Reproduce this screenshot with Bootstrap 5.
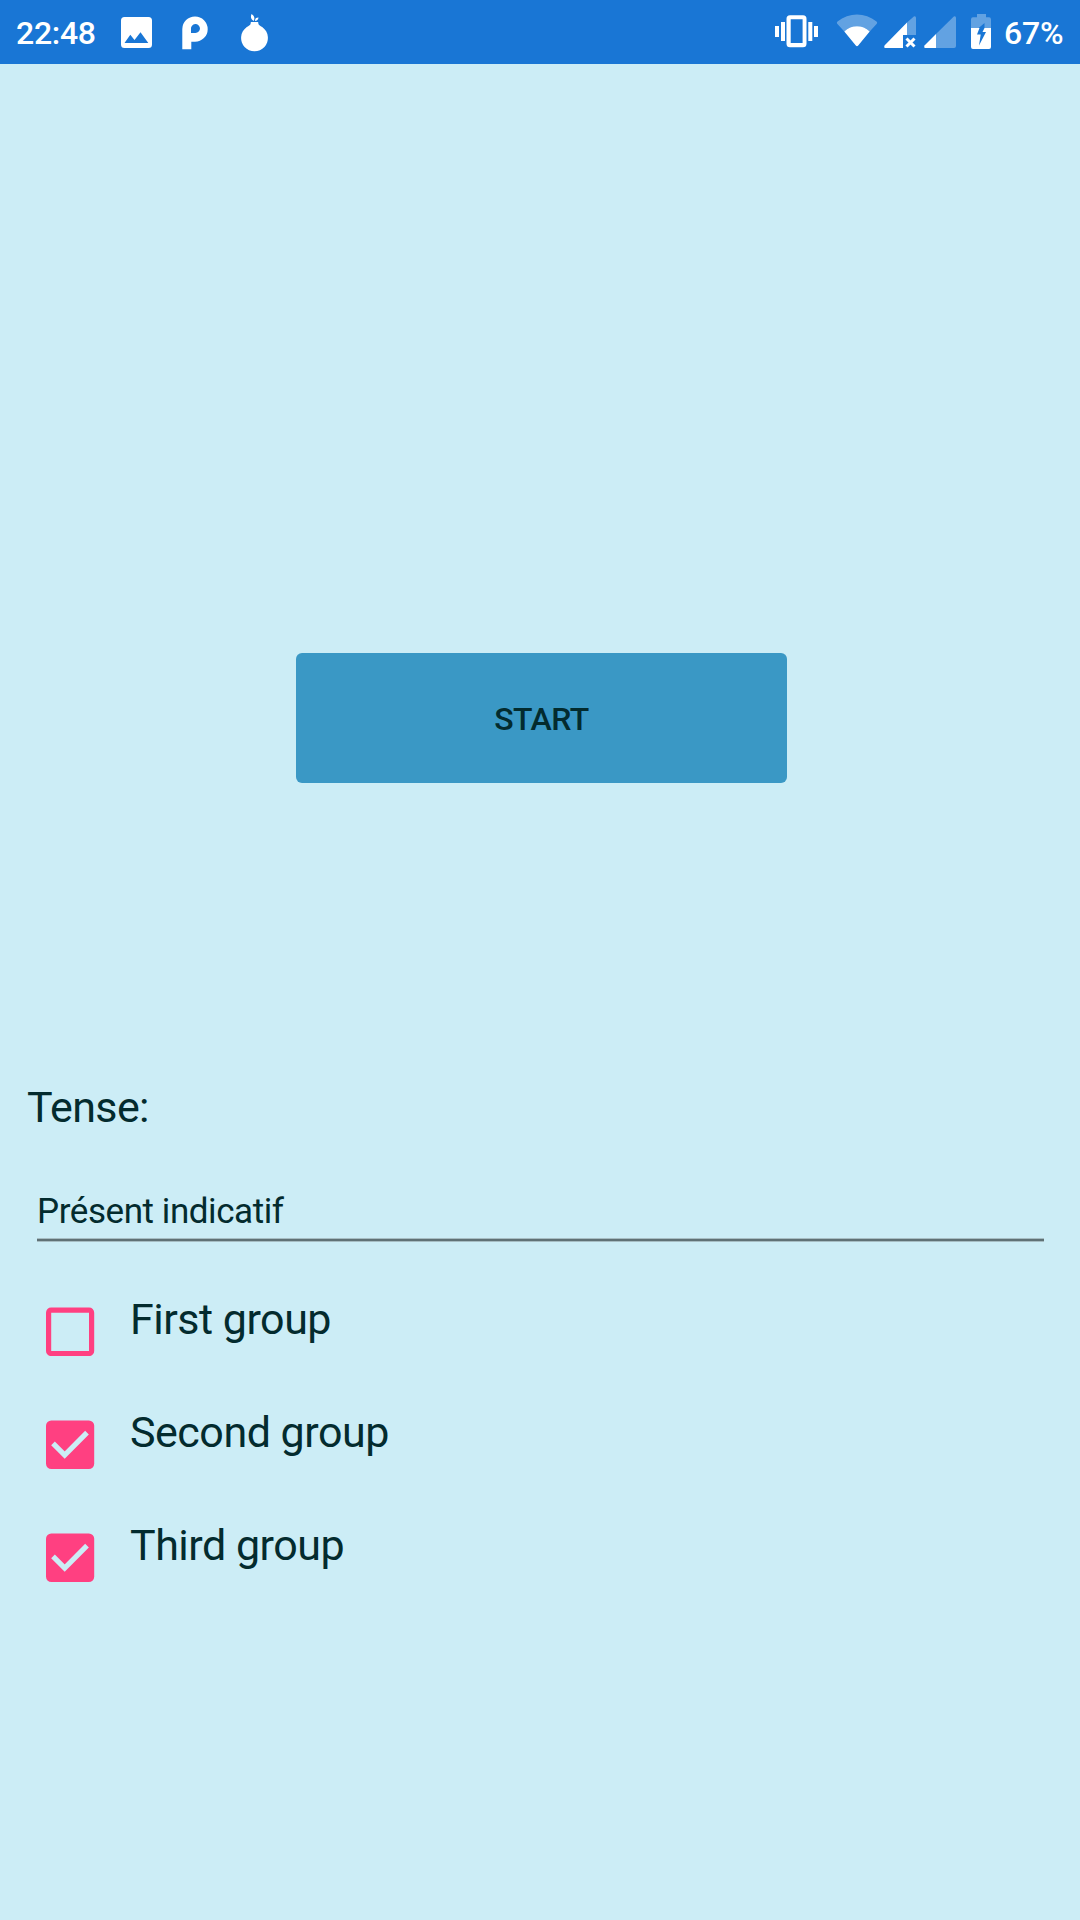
<!DOCTYPE html>
<html lang="en">
<head>
<meta charset="utf-8">
<meta name="viewport" content="width=device-width, initial-scale=1">
<title>Conjugation</title>
<link href="https://cdn.jsdelivr.net/npm/bootstrap@5.3.0/dist/css/bootstrap.min.css" rel="stylesheet">
<style>
body { background: #ccedf6; color: #032b2e; font-family: Roboto, "Liberation Sans", sans-serif; height: 1920px; overflow: hidden; }
.status-bar { background: #1976d5; color: #fff; height: 64px; font-size: 32px; font-weight: 500; line-height: 66px; padding: 0 16px; }
.status-bar svg { height: 64px; display: block; fill: #fff; flex: none; }
.clock { width: 96px; letter-spacing: -.3px; }
.percent { width: 60px; white-space: nowrap; letter-spacing: -.2px; }
.start-area { padding-top: 589px; padding-left: 3px; height: 1018px; }
.btn-start { --bs-btn-bg: #3a98c5; --bs-btn-color: #032b2e; --bs-btn-hover-bg: #3389b3; width: 491px; height: 130px; border: 0; border-radius: 6px; font-size: 32px; font-weight: 500; letter-spacing: -.5px; padding: 1px 0 0; }
.tense-label { font-size: 43px; line-height: 50px; letter-spacing: -.6px; padding-left: 27px; margin-bottom: 58px; }
.tense-field { margin: 0 36px 0 37px; height: 52px; font-size: 35px; line-height: 44px; letter-spacing: -.43px; background: linear-gradient(#a6bdc3 1px, #5f7175 1px, #5f7175 3px, #a6bdc3 3px) bottom / 100% 4px no-repeat; }
.group-list { padding: 38px 0 0 46px; }
.group-row { height: 113px; padding-top: 14px; gap: 35px; font-size: 43px; line-height: 50px; letter-spacing: -.49px; }
.group-row svg { width: 49px; height: 49px; margin-top: 13px; flex: none; }
</style>
<script src="https://cdn.jsdelivr.net/npm/bootstrap@5.3.0/dist/js/bootstrap.bundle.min.js" defer></script>
</head>
<body>
<header class="status-bar d-flex justify-content-between">
  <div class="d-flex">
    <span class="clock">22:48</span>
    <svg width="58" viewBox="112 0 58 64"><path fill-rule="evenodd" d="M124.500 17H148.500Q152 17 152 20.500V44.500Q152 48 148.500 48H124.500Q121 48 121 44.500V20.500Q121 17 124.500 17ZM124.500 43H148.300L140.500 32.300L134.500 40L130.300 34.800Z"/></svg>
    <svg width="58" viewBox="170 0 58 64"><path fill-rule="evenodd" d="M182.300 49.300V29A12.700 12.700 0 1 1 195 41.800H191.300V49.300ZM191 33V29A4.500 4.500 0 1 1 195.500 33Z"/></svg>
    <svg width="58" viewBox="228 0 58 64"><path d="M250.800 22H258.200C258 25 260 25.700 262.500 27.200A13.400 13.400 0 1 1 246.500 27.200C249 25.700 251 25 250.800 22ZM253.800 21C250.500 19 250.500 17 251.500 14C254.500 16 255 18 253.800 21ZM255 21C255 18.500 256 17.500 258.500 17.500C258.300 19.500 257 21 255 21Z"/></svg>
  </div>
  <div class="d-flex">
    <svg width="62" viewBox="768 0 62 64"><path fill-rule="evenodd" d="M790 15.300H803Q806.500 15.300 806.500 18.800V43.800Q806.500 47.300 803 47.300H790Q786.500 47.300 786.500 43.800V18.800Q786.500 15.300 790 15.300ZM790.700 19.300V43H802.600V19.300Z"/><path d="M775 26h4v11h-4zM781 22h4v19h-4zM808.300 22h4v19h-4zM814 26h4v11h-4z"/></svg>
    <svg width="50" viewBox="830 0 50 64"><path fill-opacity=".32" d="M837 23.500Q836.500 22.500 837.500 21.500C849 12.300 865 12.300 876.500 21.500Q877.700 22.500 876.800 23.800L869.700 31.500C863 24.500 851 24.500 844.300 31.500Z"/><path d="M844.300 31.500C851 24.500 863 24.500 869.700 31.500L858.200 45.500Q857 47 855.800 45.500Z"/></svg>
    <svg width="40" viewBox="880 0 40 64"><path fill-opacity=".32" d="M907 22.500L913.800 16.400Q916 15.500 916 18V35H907Z"/><path d="M907 22.500V35H903V48H885Q883.500 47.500 884.500 45.500Z"/><path d="M906.500 38.500L914.500 46.500M914.500 38.500L906.500 46.500" fill="none" stroke="#fff" stroke-width="3"/></svg>
    <svg width="42" viewBox="920 0 42 64"><path fill-opacity=".32" d="M936 34L953.800 16.400Q956 15.500 956 18V46Q956 48 954 48H936Z"/><path d="M936 34V48H925Q923.500 47.500 924.500 45.500Z"/></svg>
    <svg width="42" viewBox="962 0 42 64"><path fill-opacity=".32" d="M977 14H986V17.300H989Q991 17.300 991 19.500V28H984.500V23L978.700 28H971V19.500Q971 17.300 973 17.300H977Z"/><path fill-rule="evenodd" d="M971 28H979.500L977 34.500H980.700L979 45.500L986 32H982.500L984.500 28H991V47Q991 49 989 49H973Q971 49 971 47Z"/></svg>
    <span class="percent">67%</span>
  </div>
</header>
<main>
  <section class="start-area d-flex justify-content-center align-items-start">
    <button class="btn btn-start" type="button">START</button>
  </section>
  <section>
    <div class="tense-label">Tense:</div>
    <div class="tense-field">Présent indicatif</div>
  </section>
  <section class="group-list d-flex flex-column">
    <div class="group-row d-flex align-items-start" role="checkbox" aria-checked="false">
      <svg viewBox="0 0 49 49"><rect x="2.600" y="3.200" width="43" height="43.300" rx="2.500" fill="none" stroke="#ff4081" stroke-width="5.200"/></svg>
      <span>First group</span>
    </div>
    <div class="group-row d-flex align-items-start" role="checkbox" aria-checked="true">
      <svg viewBox="0 0 49 49"><rect y=".5" width="48.200" height="48.500" rx="5.300" fill="#ff4081"/><path d="M7 23.300L18.700 35L41 12.700" fill="none" stroke="#ccedf6" stroke-width="5.200"/></svg>
      <span>Second group</span>
    </div>
    <div class="group-row d-flex align-items-start" role="checkbox" aria-checked="true">
      <svg viewBox="0 0 49 49"><rect y=".5" width="48.200" height="48.500" rx="5.300" fill="#ff4081"/><path d="M7 23.300L18.700 35L41 12.700" fill="none" stroke="#ccedf6" stroke-width="5.200"/></svg>
      <span>Third group</span>
    </div>
  </section>
</main>
</body>
</html>
